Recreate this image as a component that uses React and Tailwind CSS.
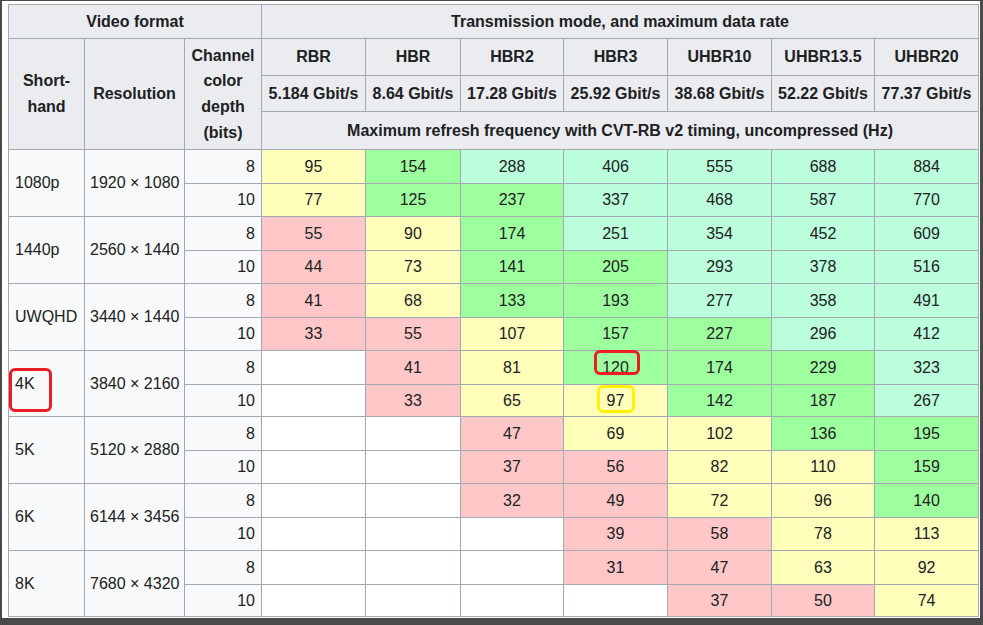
import React from "react";

const colors = {
  Y: "bg-[#ffffbb]",
  G: "bg-[#9eff9e]",
  M: "bg-[#bbffdd]",
  P: "bg-[#ffc7c7]",
  "-": "bg-white",
};

const modes = [
  { name: "RBR", rate: "5.184 Gbit/s" },
  { name: "HBR", rate: "8.64 Gbit/s" },
  { name: "HBR2", rate: "17.28 Gbit/s" },
  { name: "HBR3", rate: "25.92 Gbit/s" },
  { name: "UHBR10", rate: "38.68 Gbit/s" },
  { name: "UHBR13.5", rate: "52.22 Gbit/s" },
  { name: "UHBR20", rate: "77.37 Gbit/s" },
];

// each cell: value + color letter, "-" for empty
const formats = [
  {
    name: "1080p",
    res: "1920 × 1080",
    rows: ["95Y 154G 288M 406M 555M 688M 884M", "77Y 125G 237G 337M 468M 587M 770M"],
  },
  {
    name: "1440p",
    res: "2560 × 1440",
    rows: ["55P 90Y 174G 251M 354M 452M 609M", "44P 73Y 141G 205G 293M 378M 516M"],
  },
  {
    name: "UWQHD",
    res: "3440 × 1440",
    rows: ["41P 68Y 133G 193G 277M 358M 491M", "33P 55P 107Y 157G 227G 296M 412M"],
  },
  {
    name: "4K",
    res: "3840 × 2160",
    rows: ["- 41P 81Y 120G 174G 229G 323M", "- 33P 65Y 97Y 142G 187G 267M"],
  },
  {
    name: "5K",
    res: "5120 × 2880",
    rows: ["- - 47P 69Y 102Y 136G 195G", "- - 37P 56P 82Y 110Y 159G"],
  },
  {
    name: "6K",
    res: "6144 × 3456",
    rows: ["- - 32P 49P 72Y 96Y 140G", "- - - 39P 58P 78Y 113Y"],
  },
  {
    name: "8K",
    res: "7680 × 4320",
    rows: ["- - - 31P 47P 63Y 92Y", "- - - - 37P 50P 74Y"],
  },
];

const rowHeights = [
  "h-[34px]", "h-[33px]", "h-[34px]", "h-[33px]", "h-[34px]", "h-[33px]", "h-[34px]",
  "h-[32px]", "h-[34px]", "h-[33px]", "h-[34px]", "h-[33px]", "h-[34px]", "h-[32px]",
];

const th = "border border-[#a2a9b1] bg-[#eaecf0] px-[6px] py-[2px] font-bold text-center align-middle";
const td = "border border-[#a2a9b1] px-[6px] py-[2px] align-middle";

const App = () => {
  return (
    <div className="w-[983px] h-[625px] bg-[#4a4a4a] pl-[2px] pt-[1px]">
      <div className="relative w-[978px] h-[617px] bg-white pl-[6px] pt-[3px] font-['Liberation_Sans',Arial,sans-serif] text-[16px] leading-[1.6] text-[#202122]">
        <table className="table-fixed border-collapse w-[970px]">
          <colgroup>
            <col className="w-[76px]" />
            <col className="w-[100px]" />
            <col className="w-[77px]" />
            <col className="w-[104px]" />
            <col className="w-[95px]" />
            <col className="w-[103px]" />
            <col className="w-[104px]" />
            <col className="w-[104px]" />
            <col className="w-[103px]" />
            <col className="w-[104px]" />
          </colgroup>
          <thead>
            <tr className="h-[34px]">
              <th colSpan={3} className={th}>
                Video format
              </th>
              <th colSpan={7} className={th}>
                Transmission mode, and maximum data rate
              </th>
            </tr>
            <tr className="h-[37px]">
              <th rowSpan={3} className={th}>
                Short-hand
              </th>
              <th rowSpan={3} className={th}>
                Resolution
              </th>
              <th rowSpan={3} className={th}>
                Channel color depth (bits)
              </th>
              {modes.map((m) => (
                <th key={m.name} className={th}>
                  {m.name}
                </th>
              ))}
            </tr>
            <tr className="h-[36px]">
              {modes.map((m) => (
                <th key={m.rate} className={th}>
                  {m.rate}
                </th>
              ))}
            </tr>
            <tr className="h-[38px]">
              <th colSpan={7} className={th}>
                Maximum refresh frequency with CVT-RB v2 timing, uncompressed (Hz)
              </th>
            </tr>
          </thead>
          <tbody>
            {formats.map((f, fi) =>
              f.rows.map((row, ri) => (
                <tr key={f.name + ri} className={rowHeights[fi * 2 + ri]}>
                  {ri === 0 && (
                    <>
                      <td rowSpan={2} className={td + " bg-[#f8f9fa] text-left"}>
                        {f.name}
                      </td>
                      <td rowSpan={2} className={td + " bg-[#f8f9fa] text-left whitespace-nowrap pl-[5px] pr-[2px]"}>
                        {f.res}
                      </td>
                    </>
                  )}
                  <td className={td + " bg-[#f8f9fa] text-right"}>{ri === 0 ? 8 : 10}</td>
                  {row.split(" ").map((c, ci) => (
                    <td key={ci} className={td + " text-center " + colors[c === "-" ? "-" : c.slice(-1)]}>
                      {c === "-" ? "" : c.slice(0, -1)}
                    </td>
                  ))}
                </tr>
              ))
            )}
          </tbody>
        </table>

        {/* highlight marks drawn over the table */}
        <span className="absolute left-[7px] top-[367px] w-[43px] h-[44px] border-[3px] border-[#ec1c24] rounded-[6px]" />
        <span className="absolute left-[592px] top-[349px] w-[46px] h-[25px] border-[3px] border-[#ec1c24] rounded-[6px]" />
        <span className="absolute left-[595px] top-[384px] w-[38px] h-[28px] border-[3px] border-[#fff200] rounded-[6px]" />
      </div>
    </div>
  );
};

export default App;
